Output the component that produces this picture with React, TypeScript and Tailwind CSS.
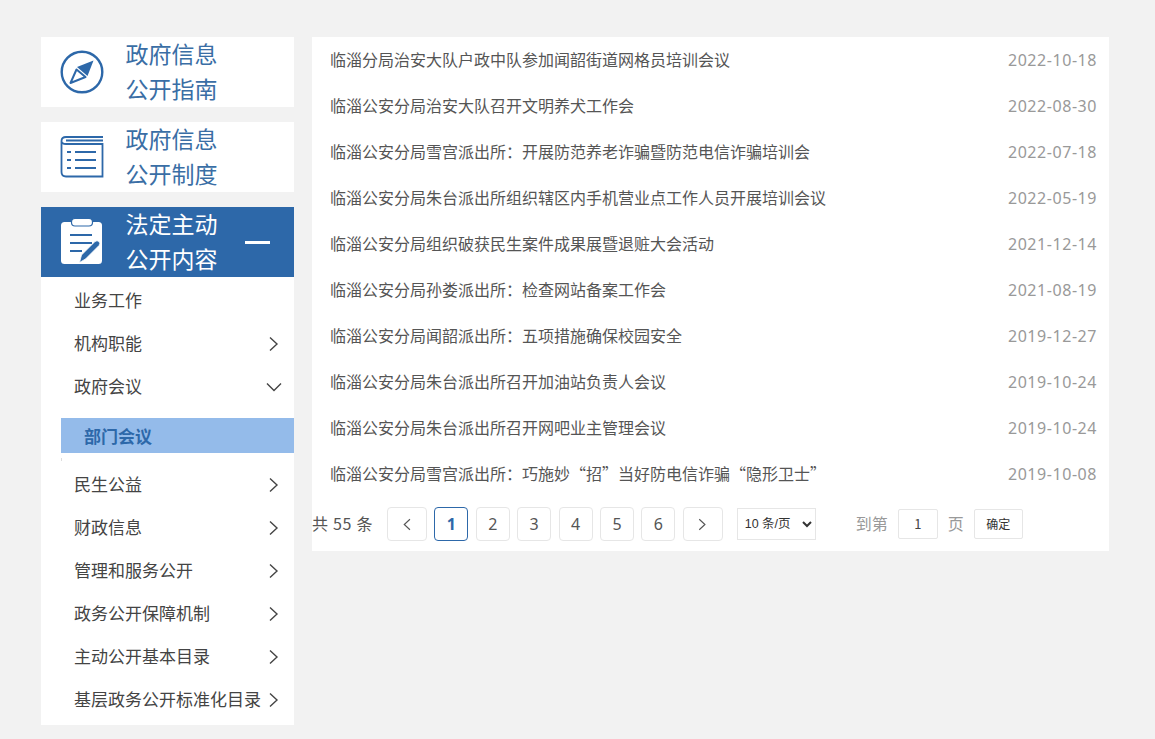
import React from 'react';

const cjk = "font-['Noto_Sans_CJK_SC','Noto_Sans',sans-serif]";

const news = [
  { title: '临淄分局治安大队户政中队参加闻韶街道网格员培训会议', date: '2022-10-18' },
  { title: '临淄公安分局治安大队召开文明养犬工作会', date: '2022-08-30' },
  { title: '临淄公安分局雪宫派出所：开展防范养老诈骗暨防范电信诈骗培训会', date: '2022-07-18' },
  { title: '临淄公安分局朱台派出所组织辖区内手机营业点工作人员开展培训会议', date: '2022-05-19' },
  { title: '临淄公安分局组织破获民生案件成果展暨退赃大会活动', date: '2021-12-14' },
  { title: '临淄公安分局孙娄派出所：检查网站备案工作会', date: '2021-08-19' },
  { title: '临淄公安分局闻韶派出所：五项措施确保校园安全', date: '2019-12-27' },
  { title: '临淄公安分局朱台派出所召开加油站负责人会议', date: '2019-10-24' },
  { title: '临淄公安分局朱台派出所召开网吧业主管理会议', date: '2019-10-24' },
  { title: '临淄公安分局雪宫派出所：巧施妙“招”当好防电信诈骗“隐形卫士”', date: '2019-10-08' },
];

const Chevron = ({ dir, size = 16 }: { dir: 'right' | 'down' | 'left'; size?: number }) => (
  <svg width={size} height={size} viewBox="0 0 16 16" fill="none" stroke="currentColor" strokeWidth="1.4">
    {dir === 'right' && <path d="M4 1.5 L11 8 L4 14.5" />}
    {dir === 'left' && <path d="M11 1.5 L4 8 L11 14.5" />}
    {dir === 'down' && <path d="M1 4.5 L8 11.5 L15 4.5" />}
  </svg>
);

const CompassIcon = () => (
  <svg width="44" height="44" viewBox="0 0 44 44" fill="none">
    <circle cx="22" cy="22" r="20.3" stroke="#2d68a9" strokeWidth="2.4" />
    <path d="M33.5 10.5 L27.5 26 L17 17 Z" fill="#2d68a9" />
    <path d="M10.5 33 L16.5 19.5 L25.5 27 Z" fill="none" stroke="#2d68a9" strokeWidth="2" strokeLinejoin="round" />
  </svg>
);

const BookIcon = () => (
  <svg width="44" height="44" viewBox="0 0 44 44" fill="none" stroke="#2d68a9" strokeWidth="1.8">
    <path d="M43 2 H6 Q1.5 2 1.5 6 V37 Q1.5 41.5 6 41.5 H42.5 V9 H6 Q1.5 9 1.5 6" />
    <path d="M6 5.5 H43" />
    <path d="M7 17 H11 M15 17 H36 M7 25 H11 M15 25 H36 M7 33 H11 M15 33 H36" strokeWidth="1.9" />
  </svg>
);

const ClipboardIcon = () => (
  <svg width="44" height="48" viewBox="0 0 44 48">
    <rect x="1" y="4" width="41" height="42" rx="3.5" fill="#fff" />
    <rect x="11.5" y="0.5" width="21" height="7.5" rx="3.5" fill="#fff" stroke="#2d68a9" strokeWidth="1.2" />
    <path d="M10 17 H32 M10 25 H32 M10 33 H22" stroke="#2d68a9" strokeWidth="2.2" />
    <path d="M19.5 44.5 L21.5 37 L35 23.5 Q37 22 39 23.5 Q40.5 25.5 39 27.5 L25.5 41 Z" fill="#2d68a9" stroke="#fff" strokeWidth="0.8" />
  </svg>
);

const HeadCard = ({ icon, lines, active }: { icon: React.ReactNode; lines: string[]; active?: boolean }) => (
  <div className={`h-[70px] flex items-center ${active ? 'bg-[#2d68a9] text-white' : 'bg-white text-[#3a6ea5]'}`}>
    <div className="w-[84.6px] pl-[19px] shrink-0 flex items-center">{icon}</div>
    <div className="text-[23px] leading-[35px] flex-1 pb-[2px]">
      {lines.map(l => <div key={l}>{l}</div>)}
    </div>
    {active && <div className="w-[25px] h-[3px] bg-white mr-[24px]" />}
  </div>
);

const MenuItem = ({ label, arrow }: { label: string; arrow?: 'right' | 'down' }) => (
  <div className="h-[43px] flex items-center justify-between pl-[33px] pr-[12px] text-[17px] text-[#444]">
    <span>{label}</span>
    {arrow && <span className="mt-[2px] flex"><Chevron dir={arrow} /></span>}
  </div>
);

const PageBtn = ({ children, active }: { children: React.ReactNode; active?: boolean }) => (
  <div className={`h-[34px] w-[34px] flex items-center justify-center rounded-[4px] border text-[16px] font-['Noto_Sans',sans-serif] ${active ? 'border-[#2d68a9] text-[#2d68a9] font-bold' : 'border-[#e6e6e6] text-[#555]'}`}>
    {children}
  </div>
);

export default function App() {
  return (
    <div className={`min-h-[739px] bg-[#f2f2f2] ${cjk}`}>
      <div className="flex items-start gap-[18px] pt-[37px] pl-[41px] w-[1109px]">
        <div className="w-[253px] shrink-0 flex flex-col gap-[15px]">
          <HeadCard icon={<CompassIcon />} lines={['政府信息', '公开指南']} />
          <HeadCard icon={<BookIcon />} lines={['政府信息', '公开制度']} />
          <div>
            <HeadCard icon={<ClipboardIcon />} lines={['法定主动', '公开内容']} active />
            <div className="bg-white pt-[1px] pb-[5px]">
              <MenuItem label="业务工作" />
              <MenuItem label="机构职能" arrow="right" />
              <MenuItem label="政府会议" arrow="down" />
              <div className="pl-[20px] mt-[11px] mb-[1px]">
                <div className="h-[35px] flex items-center pl-[23px] bg-[#94bbea] text-[17px] font-bold text-[#2d68a9]">部门会议</div>
                <div className="h-[3px] w-px bg-[#ddd] mt-[5px]" />
              </div>
              <MenuItem label="民生公益" arrow="right" />
              <MenuItem label="财政信息" arrow="right" />
              <MenuItem label="管理和服务公开" arrow="right" />
              <MenuItem label="政务公开保障机制" arrow="right" />
              <MenuItem label="主动公开基本目录" arrow="right" />
              <MenuItem label="基层政务公开标准化目录" arrow="right" />
            </div>
          </div>
        </div>

        <div className="flex-1 bg-white h-[514px]">
          {news.map(n => (
            <div key={n.title + n.date} className="h-[46px] flex items-center justify-between pl-[18px] pr-[12px]">
              <span className="text-[16px] text-[#555] mb-[2px]">{n.title}</span>
              <span className="text-[16px] text-[#999] tracking-[0.55px] font-['Noto_Sans',sans-serif]">{n.date}</span>
            </div>
          ))}
          <div className="flex items-center mt-[10px] h-[34px] text-[16px]">
            <span className="text-[#555] w-[75px] shrink-0 tracking-[0.7px] mb-[2px] whitespace-nowrap">共 55 条</span>
            <div className="flex items-center gap-[7.4px] shrink-0">
              <div className="h-[34px] w-[40px] flex items-center justify-center rounded-[4px] border border-[#e6e6e6] text-[#555]"><Chevron dir="left" size={13} /></div>
              <PageBtn active>1</PageBtn>
              <PageBtn>2</PageBtn>
              <PageBtn>3</PageBtn>
              <PageBtn>4</PageBtn>
              <PageBtn>5</PageBtn>
              <PageBtn>6</PageBtn>
              <div className="h-[34px] w-[40px] flex items-center justify-center rounded-[4px] border border-[#e6e6e6] text-[#555]"><Chevron dir="right" size={13} /></div>
            </div>
            <select defaultValue="10" className="ml-[14px] h-[32px] w-[79px] border border-[#e6e6e6] bg-white text-[12.5px] text-[#333] pl-[3px] rounded-none font-['Liberation_Sans','Noto_Sans_CJK_SC',sans-serif]">
              <option value="10">10 条/页</option>
            </select>
            <span className="ml-[40px] text-[#999] mb-[2px]">到第</span>
            <div className="ml-[10px] w-[40px] h-[30px] border border-[#e6e6e6] rounded-[2px] flex items-center justify-center text-[13px] text-[#444]">1</div>
            <span className="ml-[10px] text-[#999] mb-[2px]">页</span>
            <div className="ml-[10px] w-[49px] h-[30px] border border-[#e6e6e6] rounded-[2px] flex items-center justify-center text-[12px] text-[#333]">确定</div>
          </div>
        </div>
      </div>
    </div>
  );
}
